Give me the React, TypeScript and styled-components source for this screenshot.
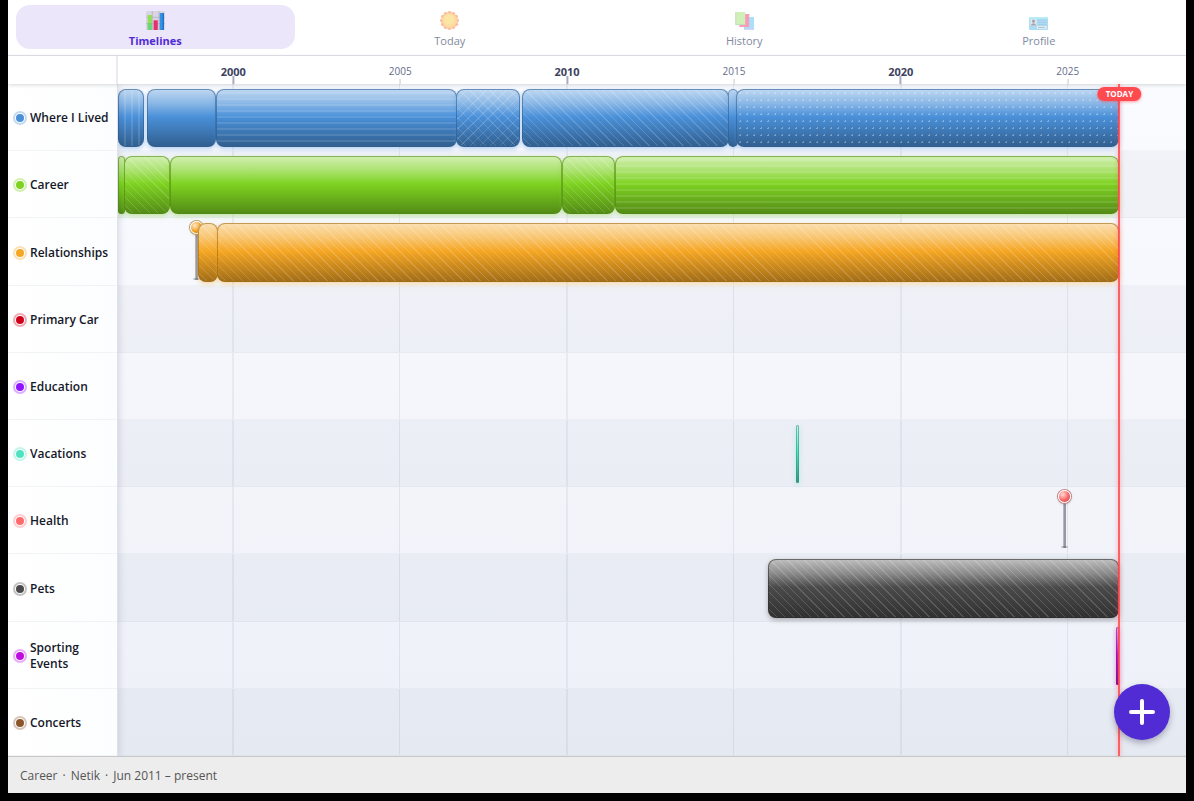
import React from "react";
import styled, { createGlobalStyle, css } from "styled-components";

const GlobalStyle = createGlobalStyle`
  * { box-sizing: border-box; }
  body {
    margin: 0;
    background: #000;
    font-family: "Open Sans", "Noto Sans", sans-serif;
  }
  button { font-family: inherit; }
`;

/* ---------- data ---------- */

const RANGE_START = 1996.545;
const RANGE_YEARS = 32;
const TODAY = 2026.55;

const toPercent = (year: number) =>
  (Math.max(year - RANGE_START, 0) / RANGE_YEARS) * 100;

type Pattern = "plain" | "vertical" | "horizontal" | "diagonal" | "cross" | "dots";

interface Span {
  from: number;
  to: number;
  pattern: Pattern;
}

interface Lane {
  name: string;
  color: string;
  spans?: Span[];
  pins?: number[];
}

const lanes: Lane[] = [
  {
    name: "Where I Lived",
    color: "#4a90d9",
    spans: [
      { from: 1995, to: 1997.33, pattern: "vertical" },
      { from: 1997.4, to: 1999.49, pattern: "plain" },
      { from: 1999.48, to: 2006.69, pattern: "horizontal" },
      { from: 2006.67, to: 2008.6, pattern: "cross" },
      { from: 2008.65, to: 2014.84, pattern: "diagonal" },
      { from: 2014.82, to: 2015.12, pattern: "plain" },
      { from: 2015.06, to: TODAY, pattern: "dots" },
    ],
  },
  {
    name: "Career",
    color: "#7ed321",
    spans: [
      { from: 1995, to: 1996.76, pattern: "plain" },
      { from: 1996.73, to: 1998.1, pattern: "diagonal" },
      { from: 1998.1, to: 2009.85, pattern: "plain" },
      { from: 2009.84, to: 2011.45, pattern: "diagonal" },
      { from: 2011.43, to: TODAY, pattern: "horizontal" },
    ],
  },
  {
    name: "Relationships",
    color: "#f5a623",
    pins: [1998.92],
    spans: [
      { from: 1998.93, to: 1999.54, pattern: "diagonal" },
      { from: 1999.52, to: TODAY, pattern: "diagonal" },
    ],
  },
  { name: "Primary Car", color: "#d0021b" },
  { name: "Education", color: "#9013fe" },
  {
    name: "Vacations",
    color: "#50e3c2",
    spans: [{ from: 2016.86, to: 2016.9, pattern: "plain" }],
  },
  { name: "Health", color: "#ff6b6b", pins: [2024.93] },
  {
    name: "Pets",
    color: "#4a4a4a",
    spans: [{ from: 2016.01, to: TODAY, pattern: "diagonal" }],
  },
  {
    name: "Sporting Events",
    color: "#bd10e0",
    spans: [{ from: 2026.46, to: TODAY, pattern: "plain" }],
  },
  { name: "Concerts", color: "#8b572a" },
];

const years = [2000, 2005, 2010, 2015, 2020, 2025];

/* ---------- shell and tabs ---------- */

const Shell = styled.div`
  display: flex;
  flex-direction: column;
  min-height: calc(100vh - 8px);
  margin: 0 8px 8px;
  background: #fff;
`;

const TabBar = styled.nav`
  display: grid;
  grid-template-columns: repeat(4, 1fr);
  border-bottom: 1px solid #e2e2ec;
`;

const Tab = styled.button<{ $active?: boolean }>`
  display: flex;
  flex-direction: column;
  align-items: center;
  gap: 3px;
  height: 44px;
  margin: 5px 8px 6px;
  padding: 6px 0 0;
  border: 0;
  border-radius: 14px;
  background: ${(p) => (p.$active ? "#ece6fb" : "transparent")};
  color: ${(p) => (p.$active ? "#512bd4" : "#8289a0")};
  font-size: 11px;
  line-height: 16px;
  font-weight: ${(p) => (p.$active ? 700 : 400)};
  cursor: pointer;

  svg {
    display: block;
    flex: none;
    opacity: ${(p) => (p.$active ? 1 : 0.5)};
  }
`;

/* ---------- timeline ---------- */

const AxisRow = styled.div`
  position: relative;
  z-index: 2;
  display: flex;
  height: 28px;
  background: #fff;
  box-shadow: 0 1px 4px rgba(0, 0, 0, 0.16);
`;

const AxisCorner = styled.div`
  flex: none;
  width: 110px;
  border-right: 2px solid #e8ebf3;
`;

const Axis = styled.div`
  position: relative;
  flex: 1;
`;

const YearMark = styled.div<{ $major: boolean }>`
  position: absolute;
  top: 8px;
  bottom: 0;
  display: flex;
  flex-direction: column;
  align-items: center;
  transform: translateX(-50%);
  color: ${(p) => (p.$major ? "#3c4260" : "#666c8c")};
  font-size: ${(p) => (p.$major ? 11 : 10)}px;
  line-height: 15px;
  font-weight: ${(p) => (p.$major ? 700 : 400)};

  &::after {
    content: "";
    position: absolute;
    bottom: 0;
    width: ${(p) => (p.$major ? 2 : 1)}px;
    height: ${(p) => (p.$major ? 8 : 5)}px;
    background: ${(p) => (p.$major ? "#a9acbe" : "#c6c8d4")};
  }
`;

const Board = styled.main`
  display: flex;
  flex: 1;
`;

const Labels = styled.div`
  position: relative;
  z-index: 1;
  display: flex;
  flex: none;
  flex-direction: column;
  width: 110px;
  border-right: 1px solid #dde2ec;
  background: linear-gradient(90deg, #fff, #fcfdfe);
  box-shadow: 2px 0 6px rgba(30, 40, 80, 0.12);
`;

const Label = styled.div`
  display: flex;
  flex: 1 0 56px;
  align-items: center;
  gap: 6px;
  padding: 2px 8px 0;
  border-bottom: 1px solid #f1f3f6;
  color: #141829;
  font-size: 12px;
  line-height: 16px;
  font-weight: 600;
`;

const Dot = styled.span<{ $color: string }>`
  flex: none;
  width: 8px;
  height: 8px;
  border-radius: 50%;
  background: ${(p) => p.$color};
  box-shadow: 0 0 0 1px #fff, 0 0 0 3px ${(p) => p.$color}55;
`;

const Plot = styled.div`
  position: relative;
  display: flex;
  flex: 1;
  flex-direction: column;
  background: linear-gradient(180deg, #fafbff, #edf0f7);
`;

const Track = styled.div`
  position: relative;
  flex: 1 0 56px;
  border-bottom: 1px solid rgba(40, 50, 80, 0.03);

  &:nth-child(even) {
    background: rgba(20, 50, 90, 0.035);
  }
`;

const GridLine = styled.div<{ $major: boolean }>`
  position: absolute;
  top: 0;
  bottom: 0;
  width: ${(p) => (p.$major ? 2 : 1)}px;
  margin-left: -1px;
  background: ${(p) => (p.$major ? "rgba(60, 70, 110, 0.07)" : "rgba(60, 70, 110, 0.09)")};
`;

const patterns = {
  plain: "none",
  vertical:
    "repeating-linear-gradient(90deg, transparent 0 5px, rgba(255,255,255,0.12) 5px 7px)",
  horizontal:
    "repeating-linear-gradient(0deg, transparent 0 4px, rgba(255,255,255,0.11) 4px 6px)",
  diagonal:
    "repeating-linear-gradient(45deg, transparent 0 5px, rgba(255,255,255,0.16) 5px 6px)",
  cross:
    "repeating-linear-gradient(45deg, transparent 0 6px, rgba(255,255,255,0.14) 6px 7px), repeating-linear-gradient(-45deg, transparent 0 6px, rgba(255,255,255,0.14) 6px 7px)",
  dots: "radial-gradient(circle, rgba(255,255,255,0.32) 0 1px, transparent 1px)",
};

const Bar = styled.div<{ $color: string; $pattern: Pattern }>`
  position: absolute;
  top: 5px;
  bottom: 3px;
  min-width: 3px;
  overflow: hidden;
  border: 1px solid
    color-mix(in srgb, color-mix(in srgb, ${(p) => p.$color} 65%, #000) 60%, transparent);
  border-radius: 8px;
  background: linear-gradient(
      180deg,
      rgba(255, 255, 255, 0.65),
      rgba(255, 255, 255, 0.35) 25%,
      transparent 48%,
      rgba(0, 0, 0, 0.35)
    )
    border-box ${(p) => p.$color};
  box-shadow: 0 2px 5px ${(p) => p.$color}66;

  &::before {
    content: "";
    position: absolute;
    inset: 0;
    background: ${(p) => patterns[p.$pattern]};
    ${(p) =>
      p.$pattern === "dots" &&
      css`
        background-size: 7px 7px;
      `}
  }
`;

const Pin = styled.div`
  position: absolute;
  top: 4px;
  bottom: 5px;
  width: 3px;
  margin-left: -2px;
  background: linear-gradient(90deg, #c3c7cf, #8a8f9b 60%, #9da1ab);

  &::after {
    content: "";
    position: absolute;
    bottom: 0;
    left: -2px;
    width: 7px;
    height: 2px;
    border-radius: 50%;
    background: rgba(90, 95, 110, 0.4);
  }
`;

const PinHead = styled.span<{ $color: string }>`
  position: absolute;
  top: -1px;
  left: -5px;
  width: 13px;
  height: 13px;
  border: 1px solid #fff;
  border-radius: 50%;
  background: radial-gradient(
    circle at 35% 32%,
    color-mix(in srgb, ${(p) => p.$color} 35%, #fff) 0 8%,
    ${(p) => p.$color} 50%,
    color-mix(in srgb, ${(p) => p.$color} 70%, #000)
  );
  box-shadow: 0 0 0 1px color-mix(in srgb, ${(p) => p.$color} 45%, #999), 0 1px 3px #0004;
`;

const TodayLine = styled.div`
  position: absolute;
  z-index: 3;
  top: 0;
  bottom: 0;
  width: 2px;
  margin-left: -1px;
  background: rgba(255, 75, 80, 0.88);
  box-shadow: 0 0 4px rgba(255, 70, 80, 0.5);
`;

const TodayBadge = styled.span`
  position: absolute;
  top: 3px;
  left: 50%;
  padding: 0 8px;
  border-radius: 7px;
  background: #ff4b4f;
  box-shadow: 0 1px 3px rgba(255, 60, 70, 0.5);
  color: #fff;
  font-size: 8px;
  line-height: 14px;
  font-weight: 700;
  transform: translateX(-50%);
`;

const AddButton = styled.button`
  position: absolute;
  z-index: 4;
  right: 16px;
  bottom: 16px;
  display: grid;
  place-items: center;
  width: 56px;
  height: 56px;
  padding: 0;
  border: 0;
  border-radius: 50%;
  background: #512bd4;
  box-shadow: 0 3px 6px rgba(40, 40, 80, 0.35);
  cursor: pointer;
`;

const StatusBar = styled.footer`
  position: relative;
  z-index: 2;
  display: flex;
  gap: 5px;
  padding: 9px 12px 7px;
  border-top: 1px solid #c8c8c8;
  background: #ededed;
  color: #555;
  font-size: 12px;
  line-height: 20px;
`;

/* ---------- icons ---------- */

const ChartIcon = () => (
  <svg width="19" height="19" viewBox="0 0 19 19" aria-hidden="true">
    <rect width="19" height="19" rx="1.5" fill="#d9d4e2" />
    <path d="M0 6.3h19M0 12.6h19M6.3 0v19M13 0v19" stroke="#b9b3c3" strokeWidth="0.8" />
    <rect x="1.7" y="4" width="4.4" height="15" fill="#93dc5c" />
    <rect x="1.7" y="12" width="4.4" height="7" fill="#6fd37c" />
    <rect x="7.6" y="9.3" width="4.2" height="9.7" fill="#e8306f" />
    <rect x="13.7" y="2" width="4.3" height="17" fill="#2f93e6" />
    <rect x="16.6" y="2" width="1.4" height="17" fill="#2a6fc4" />
  </svg>
);

const SunIcon = () => (
  <svg width="19" height="19" viewBox="0 0 19 19" aria-hidden="true">
    {Array.from({ length: 12 }, (_, i) => {
      const a = (i * Math.PI) / 6;
      return (
        <circle
          key={i}
          cx={9.5 + 7.4 * Math.cos(a)}
          cy={9.5 + 7.4 * Math.sin(a)}
          r="2.1"
          fill="#ff7a3c"
        />
      );
    })}
    <circle cx="9.5" cy="9.5" r="7.4" fill="#f3bb45" />
    <circle cx="9" cy="8.6" r="5.2" fill="#fbcf50" />
  </svg>
);

const CardsIcon = () => (
  <svg width="19" height="19" viewBox="0 0 19 19" aria-hidden="true">
    <rect x="9" y="6" width="10" height="12.6" fill="#55c3fa" />
    <rect x="9" y="16.6" width="10" height="2" fill="#8da5ef" />
    <rect x="4.4" y="3" width="9.8" height="13" fill="#f4386f" />
    <rect x="0.4" y="1" width="9.8" height="13" fill="#a5e276" />
    <path d="M0.8 1v12.6h9.4" fill="none" stroke="#7bbd78" strokeWidth="0.9" />
  </svg>
);

const IdIcon = () => (
  <svg width="19" height="19" viewBox="0 0 19 19" aria-hidden="true">
    <rect y="6" width="19" height="13" rx="1" fill="#5fb8ea" />
    <rect y="6" width="19" height="1.8" rx="0.9" fill="#72e0f2" />
    <rect x="1.5" y="8.2" width="6" height="6.4" fill="#c9d9e3" />
    <circle cx="4.5" cy="10.2" r="1.6" fill="#5b4a55" />
    <path d="M2 14.6c0-3.2 5-3.2 5 0z" fill="#5b4a55" />
    <path d="M9 9.2h8.4M9 11.4h8.4M9 13.6h8.4" stroke="#4695cc" strokeWidth="0.8" />
    <rect x="8" y="15.2" width="9.4" height="2.4" fill="#dfeef5" />
    <path d="M9 16.4h7" stroke="#4a5a68" strokeWidth="0.8" />
  </svg>
);

const PlusIcon = () => (
  <svg width="28" height="28" viewBox="0 0 28 28" aria-hidden="true">
    <path d="M14 3v22M3 14h22" stroke="#fff" strokeWidth="4" strokeLinecap="round" />
  </svg>
);

const tabs = [
  { name: "Timelines", Icon: ChartIcon },
  { name: "Today", Icon: SunIcon },
  { name: "History", Icon: CardsIcon },
  { name: "Profile", Icon: IdIcon },
];

export default function App() {
  return (
    <>
      <GlobalStyle />
      <Shell>
        <TabBar>
          {tabs.map(({ name, Icon }, i) => (
            <Tab key={name} type="button" $active={i === 0}>
              <Icon />
              {name}
            </Tab>
          ))}
        </TabBar>

        <AxisRow>
          <AxisCorner />
          <Axis>
            {years.map((y) => (
              <YearMark key={y} $major={y % 10 === 0} style={{ left: `${toPercent(y)}%` }}>
                {y}
              </YearMark>
            ))}
          </Axis>
        </AxisRow>

        <Board>
          <Labels>
            {lanes.map((lane) => (
              <Label key={lane.name}>
                <Dot $color={lane.color} />
                {lane.name}
              </Label>
            ))}
          </Labels>

          <Plot>
            {lanes.map((lane) => (
              <Track key={lane.name}>
                {years.map((y) => (
                  <GridLine key={y} $major={y % 10 === 0} style={{ left: `${toPercent(y)}%` }} />
                ))}
                {lane.pins?.map((at) => (
                  <Pin key={at} style={{ left: `${toPercent(at)}%` }}>
                    <PinHead $color={lane.color} />
                  </Pin>
                ))}
                {lane.spans?.map((s) => (
                  <Bar
                    key={s.from}
                    $color={lane.color}
                    $pattern={s.pattern}
                    style={{
                      left: `${toPercent(s.from)}%`,
                      width: `${toPercent(s.to) - toPercent(s.from)}%`,
                    }}
                  />
                ))}
              </Track>
            ))}
            <TodayLine style={{ left: `${toPercent(TODAY)}%` }}>
              <TodayBadge>TODAY</TodayBadge>
            </TodayLine>
            <AddButton type="button" aria-label="Add">
              <PlusIcon />
            </AddButton>
          </Plot>
        </Board>

        <StatusBar>
          <span>Career</span>
          <span>·</span>
          <span>Netik</span>
          <span>·</span>
          <span>Jun 2011 – present</span>
        </StatusBar>
      </Shell>
    </>
  );
}
